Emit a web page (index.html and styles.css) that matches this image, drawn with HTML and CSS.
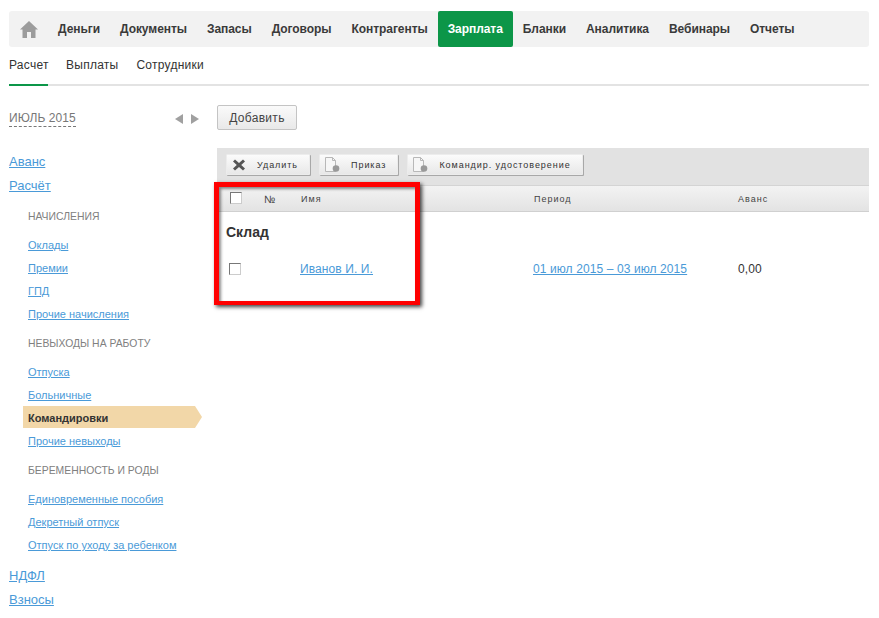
FILE: index.html
```html
<!DOCTYPE html>
<html lang="ru">
<head>
<meta charset="utf-8">
<title>Зарплата</title>
<link rel="stylesheet" href="styles.css">
</head>
<body>
<nav class="topnav">
  <a class="home"><svg width="18" height="17" viewBox="0 0 18 17"><path d="M9 0 L18 8.5 L15.5 8.5 L15.5 17 L11 17 L11 11 L7 11 L7 17 L2.5 17 L2.5 8.5 L0 8.5 Z" fill="#9c9c9c"/></svg></a>
  <a class="item">Деньги</a>
  <a class="item">Документы</a>
  <a class="item">Запасы</a>
  <a class="item">Договоры</a>
  <a class="item">Контрагенты</a>
  <a class="item active">Зарплата</a>
  <a class="item">Бланки</a>
  <a class="item">Аналитика</a>
  <a class="item">Вебинары</a>
  <a class="item">Отчеты</a>
</nav>
<div class="subnav">
  <a class="sub current">Расчет</a>
  <a class="sub">Выплаты</a>
  <a class="sub">Сотрудники</a>
</div>
<div class="columns">
  <aside class="side">
    <div class="month">
      <span class="month-name">ИЮЛЬ 2015</span>
      <span class="arrows"><i class="arrow left"></i><i class="arrow right"></i></span>
    </div>
    <a class="top-link first">Аванс</a>
    <a class="top-link">Расчёт</a>
    <div class="group">
      <div class="group-title">НАЧИСЛЕНИЯ</div>
      <a class="link">Оклады</a>
      <a class="link">Премии</a>
      <a class="link">ГПД</a>
      <a class="link">Прочие начисления</a>
      <div class="group-title">НЕВЫХОДЫ НА РАБОТУ</div>
      <a class="link">Отпуска</a>
      <a class="link">Больничные</a>
      <a class="link selected">Командировки</a>
      <a class="link">Прочие невыходы</a>
      <div class="group-title">БЕРЕМЕННОСТЬ И РОДЫ</div>
      <a class="link">Единовременные пособия</a>
      <a class="link">Декретный отпуск</a>
      <a class="link">Отпуск по уходу за ребенком</a>
    </div>
    <a class="top-link">НДФЛ</a>
    <a class="top-link">Взносы</a>
  </aside>
  <main class="main">
    <button class="add">Добавить</button>
    <div class="toolbar">
      <button class="tool tool-a"><svg class="tool-icon" width="12" height="12" viewBox="0 0 12 12"><path d="M2 .5 L6 4 L10 .5 L12 2.5 L8.2 6 L12 9.5 L10 11.5 L6 8 L2 11.5 L0 9.5 L3.8 6 L0 2.5 Z" fill="#555"/></svg><span class="tool-del">Удалить</span></button>
      <button class="tool tool-b"><svg class="tool-icon" width="15" height="15" viewBox="0 0 15 15"><path d="M.5 .5 H7.5 L10.5 3.5 V14.5 H.5 Z" fill="#f6f6f6" stroke="#b8b8b8"/><path d="M7.5 .5 V3.5 H10.5" fill="none" stroke="#b8b8b8"/><circle cx="11" cy="11.5" r="3.3" fill="#999"/></svg><span class="tool-doc">Приказ</span></button>
      <button class="tool tool-b"><svg class="tool-icon" width="15" height="15" viewBox="0 0 15 15"><path d="M.5 .5 H7.5 L10.5 3.5 V14.5 H.5 Z" fill="#f6f6f6" stroke="#b8b8b8"/><path d="M7.5 .5 V3.5 H10.5" fill="none" stroke="#b8b8b8"/><circle cx="11" cy="11.5" r="3.3" fill="#999"/></svg><span class="tool-doc">Командир. удостоверение</span></button>
    </div>
    <div class="thead">
      <span class="c-check"><i class="box head-box"></i></span>
      <span class="c-num">№</span>
      <span class="c-name">Имя</span>
      <span class="c-period">Период</span>
      <span class="c-adv">Аванс</span>
    </div>
    <h2 class="section">Склад</h2>
    <div class="row">
      <span class="c-check"><i class="box"></i></span>
      <span class="c-num"></span>
      <a class="c-name tlink">Иванов И. И.</a>
      <a class="c-period tlink">01 июл 2015 – 03 июл 2015</a>
      <span class="c-adv">0,00</span>
    </div>
    <div class="callout"></div>
  </main>
</div>
</body>
</html>
```
FILE: styles.css
```css
* { box-sizing: border-box; }
html, body { margin: 0; padding: 0; background: #fff; }
body {
  padding: 11px 10px 0 9px;
  font-family: "Liberation Sans", Arial, sans-serif;
  font-size: 12px;
  color: #333;
  height: 618px;
  overflow: hidden;
}
button { font-family: inherit; }
.topnav {
  display: flex;
  align-items: center;
  height: 36px;
  background: #f2f2f2;
  border-radius: 3px;
}
.home { display: flex; width: 39px; padding: 0 0 0 11px; }
.item {
  display: flex;
  align-items: center;
  height: 36px;
  padding: 0 10px;
  font-weight: bold;
  letter-spacing: -.06px;
  color: #3a3a3a;
}
.item.active { background: #0c9648; color: #fff; border-radius: 2px; }
.subnav {
  display: flex;
  gap: 18px;
  height: 39px;
  border-bottom: 2px solid #e3e3e3;
}
.sub {
  display: block;
  height: 39px;
  padding-top: 11px;
  letter-spacing: .25px;
  color: #333;
}
.sub.current { width: 39px; border-bottom: 2px solid #0c9648; }
.columns { display: flex; }
.side { width: 208px; flex: none; }
.month {
  display: flex;
  justify-content: space-between;
  align-items: center;
  width: 190px;
  margin-top: 25px;
  height: 16px;
}
.month-name { color: #777; border-bottom: 1px dashed #777; letter-spacing: .1px; line-height: 15px; }
.arrows { display: flex; gap: 8px; }
.arrow { display: block; width: 0; height: 0; border-top: 5px solid transparent; border-bottom: 5px solid transparent; }
.arrow.left { border-right: 8px solid #a0a0a0; }
.arrow.right { border-left: 8px solid #a0a0a0; }
.top-link {
  display: table;
  font-size: 13px;
  line-height: 15px;
  color: #4a9ad8;
  text-decoration: underline;
  margin-top: 9px;
}
.top-link.first { margin-top: 27px; }
.group { padding: 1px 0 0 19px; margin-bottom: 16px; }
.group-title { font-size: 10.4px; color: #808080; line-height: 14px; margin: 16px 0 15px; }
.link {
  display: block;
  font-size: 11px;
  line-height: 13px;
  margin-bottom: 10px;
  color: #4a9ad8;
  text-decoration: underline;
  width: fit-content;
}
.link.selected {
  position: relative;
  width: 179px;
  height: 22px;
  margin: -6px 0 7px -5px;
  padding: 6px 5px 0;
  background: #f2d7a8;
  color: #333;
  font-weight: bold;
  text-decoration: none;
  clip-path: polygon(0 0, 172px 0, 100% 50%, 172px 100%, 0 100%);
}
.main { position: relative; flex: 1; min-width: 0; padding-top: 19px; }
.add {
  display: block;
  width: 80px;
  height: 25px;
  padding: 0;
  font-size: 12px;
  letter-spacing: .3px;
  color: #444;
  background: linear-gradient(#fafafa, #e9e9e9);
  border: 1px solid #c4c4c4;
  border-radius: 2px;
}
.toolbar {
  display: flex;
  gap: 9px;
  height: 37px;
  margin-top: 18px;
  padding: 6px 9px 0;
  background: #e2e2e2;
}
.tool {
  display: flex;
  align-items: center;
  height: 21px;
  font-size: 9px;
  letter-spacing: .95px;
  color: #333;
  background: linear-gradient(#fbfbfb, #e8e8e8);
  border: 1px solid #ececec;
  border-radius: 1px;
  box-shadow: 1px 1px 0 #a8a8a8;
}
.tool-a { padding: 0 11px 0 6px; }
.tool-b { padding: 0 11px 0 5px; }
.tool-icon { flex: none; }
.tool-del { margin-left: 12px; }
.tool-doc { margin-left: 11px; }
.thead, .row { display: flex; align-items: center; }
.thead {
  height: 27px;
  font-size: 9px;
  letter-spacing: 1px;
  color: #444;
  background: linear-gradient(#f3f3f3, #e3e3e3);
  border-top: 1px solid #d4d4d4;
  border-bottom: 1px solid #d0d0d0;
}
.c-check { width: 47px; padding-left: 12px; flex: none; display: flex; }
.c-num { width: 37px; flex: none; }
.thead .c-num { font-size: 10.5px; letter-spacing: 0; }
.c-name { width: 233px; flex: none; }
.c-period { width: 204px; flex: none; }
.box { display: block; width: 12px; height: 12px; background: #fff; border: 1px solid #777; border-right-color: #ccc; border-bottom-color: #ccc; }
.head-box { margin-left: 1px; margin-top: -2px; }
.section { margin: 12px 0 0 9px; font-size: 14px; line-height: 16px; color: #333; font-weight: bold; }
.row { height: 22px; margin-top: 18px; letter-spacing: .1px; }
.tlink { color: #4a9ad8; text-decoration: underline; }
.row a.c-name { width: 233px; margin-left: -1px; }
.row a.c-period { width: 205px; }
.callout {
  position: absolute;
  left: -3px;
  top: 96px;
  width: 206px;
  height: 123px;
  border: 5px solid #f00;
  border-bottom-width: 4px;
  box-shadow: 2px 2px 4px rgba(0,0,0,.75), inset 2px 2px 3px rgba(0,0,0,.45);
}
```
